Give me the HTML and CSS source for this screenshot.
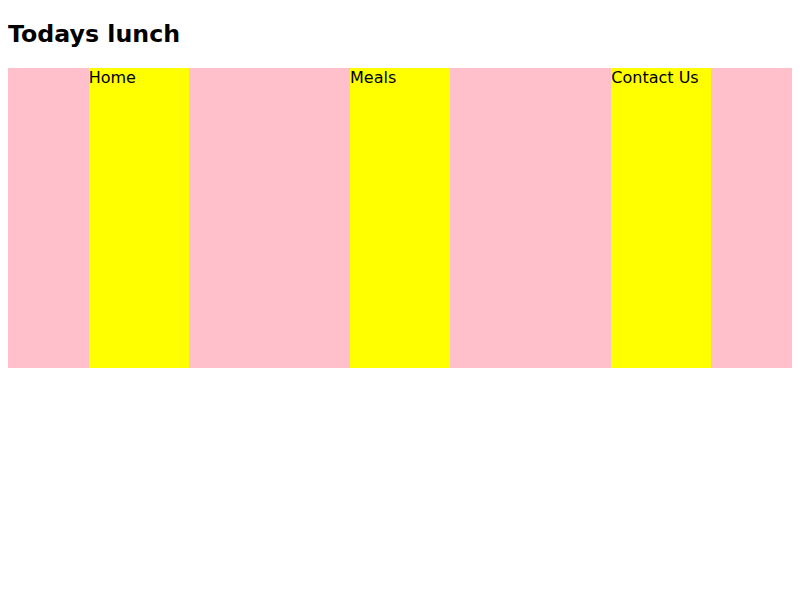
FILE: index.html
```html
<!doctype html>
<html>
<head>
	<title>Todays lunch</title>
<meta charset="utf-8">
<link rel="stylesheet" href="styles.css">
</head>
<body>
	<h2 class="title">Todays lunch</h2>
	<div class="nav">
		<a href="#" class="navItem">Home</a>
		<a href="#" class="navItem">Meals</a>
		<a href="#" class="navItem">Contact Us</a>
	</div>
</body>
</html>
```

FILE: styles.css
```css
body {
	font-family: "DejaVu Sans", sans-serif;
}

.title {
	font-size: 23.7px;
	margin: 12px 0 20px 0;
}

.nav {
	display: flex;
	justify-content: space-around;
	height: 300px;
	background-color: pink;
}

.navItem {
	width: 100px;
	background-color: yellow;
	color: black;
	text-decoration: none;
}
```
